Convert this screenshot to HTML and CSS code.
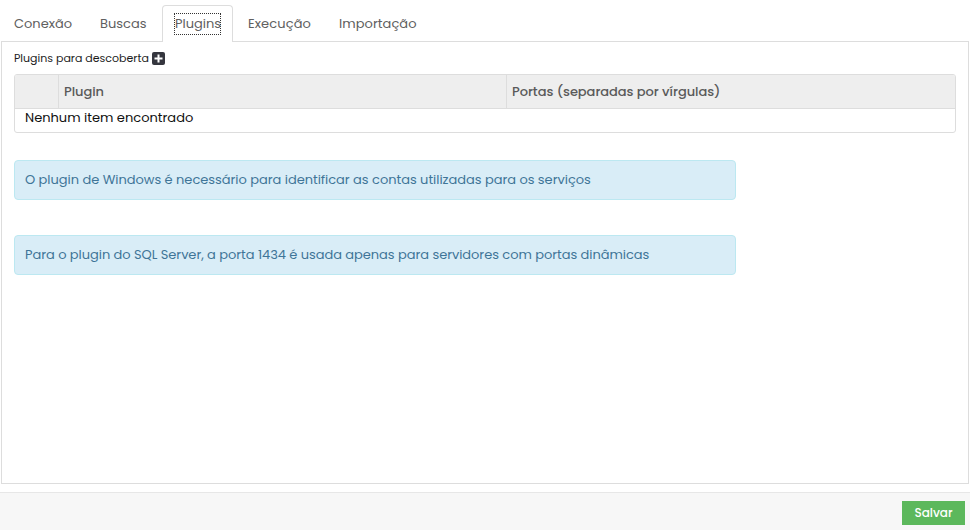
FILE: index.html
```html
<!DOCTYPE html>
<html lang="pt-BR">
<head>
<meta charset="utf-8">
<title>Plugins</title>
<link rel="stylesheet" href="styles.css">
</head>
<body>
<nav class="tabs">
  <a class="tab">Conexão</a>
  <a class="tab">Buscas</a>
  <a class="tab active"><span>Plugins</span></a>
  <a class="tab">Execução</a>
  <a class="tab">Importação</a>
</nav>
<main class="panel">
  <div class="heading"><span>Plugins para descoberta</span>
    <svg class="plus" viewBox="0 0 13 13"><rect width="13" height="13" rx="2" fill="#35363e"/><path d="M6.5 2.5v8M2.5 6.5h8" stroke="#fff" stroke-width="2"/></svg>
  </div>
  <div class="table">
    <div class="row">
      <div class="cell"></div>
      <div class="cell">Plugin</div>
      <div class="cell">Portas (separadas por vírgulas)</div>
    </div>
    <div class="empty">Nenhum item encontrado</div>
  </div>
  <div class="alert first">O plugin de Windows é necessário para identificar as contas utilizadas para os serviços</div>
  <div class="alert second">Para o plugin do SQL Server, a porta 1434 é usada apenas para servidores com portas dinâmicas</div>
</main>
<footer class="footer"><button class="save">Salvar</button></footer>
</body>
</html>
```
FILE: styles.css
```css
* { box-sizing: border-box; }
body {
  margin: 0;
  height: 530px;
  display: flex;
  flex-direction: column;
  overflow: hidden;
  background: #fff;
  font: 13px/20px Poppins, Inter, "Open Sans", sans-serif;
}
.tabs { display: flex; height: 41px; padding-top: 5px; flex: none; }
.tab { width: 86px; height: 36px; padding: 9px 0 0 14px; color: #606060; white-space: nowrap; }
.tab:nth-child(2) { width: 76px; }
.tab.active {
  width: 71px;
  height: 37px;
  padding: 7px 11px 0;
  border: 1px solid #ddd;
  border-bottom: 0;
  border-radius: 4px 4px 0 0;
  background: #fff;
  z-index: 1;
}
.tab:nth-child(4) { width: 91px; padding-left: 15px; letter-spacing: .1px; }
.tab:nth-child(5) { padding-left: 15px; letter-spacing: .05px; }
.active span { display: block; width: 47px; height: 22px; border: 1px dotted #333; line-height: 20px; }
.panel { height: 443px; flex: none; margin: 0 1px; padding: 6px 12px; border: 1px solid #ddd; }
.heading { display: flex; align-items: center; height: 20px; font-size: 11px; color: #1c1c1c; white-space: nowrap; }
.heading span { width: 138px; }
.plus { width: 13px; height: 13px; }
.table { width: 942px; height: 59px; margin-top: 6px; border: 1px solid #ddd; border-radius: 3px; overflow: hidden; color: #111; }
.row { display: grid; grid-template-columns: 43px 448px 1fr; height: 34px; background: #eee; border-bottom: 1px solid #ddd; font-weight: 500; color: #5a5a5a; letter-spacing: -.05px; }
.cell { padding: 7px 5px; }
.cell + .cell { border-left: 1px solid #ddd; }
.empty { padding-left: 10px; line-height: 18px; }
.alert { width: 722px; height: 40px; padding: 9px 10px; border: 1px solid #bce8f1; border-radius: 4px; background: #d9edf7; color: #3f7598; white-space: nowrap; }
.first { margin-top: 27px; letter-spacing: -.035px; }
.second { margin-top: 35px; letter-spacing: -.052px; }
.footer { height: 38px; margin-top: 8px; padding: 8px 5px 0; display: flex; justify-content: flex-end; background: #f7f7f7; border-top: 1px solid #e7e7e7; }
.save { width: 63px; height: 24px; padding: 0; border: 0; background: #5cb85c; color: #fff; font: 500 12px/24px Poppins, Inter, "Open Sans", sans-serif; }
```
